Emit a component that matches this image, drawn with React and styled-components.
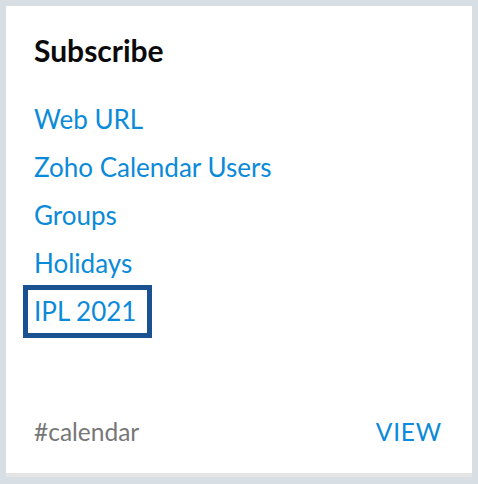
import React from 'react'
import styled, { createGlobalStyle } from 'styled-components'

const Global = createGlobalStyle`
  html, body {
    margin: 0;
    padding: 0;
    background: #d7dfe5;
  }
  body {
    font-family: Lato, "Noto Sans", sans-serif;
  }
`

const Card = styled.div`
  margin: 6px;
  width: 466px;
  height: 467px;
  padding: 0 0 0 28px;
  box-sizing: border-box;
  background: #fff;
  box-shadow: 0 4px 0 #e4e4e4;
  display: flex;
  flex-direction: column;
`

const Title = styled.h2`
  margin: 28px 0 0;
  font-size: 30px;
  font-weight: 700;
  line-height: 32px;
  color: #0a0a0a;
`

const List = styled.ul`
  list-style: none;
  margin: 38px 0 0;
  padding: 0;
  display: flex;
  flex-direction: column;
  align-items: flex-start;
  gap: 17px;
`

const Link = styled.a`
  display: inline-block;
  font-size: 26px;
  line-height: 31px;
  padding-right: ${p => (p.$focused ? '5px' : '0')};
  color: #0b8ad9;
  text-decoration: none;
  outline: ${p => (p.$focused ? '5px solid #1a5190' : 'none')};
  outline-offset: 6px;
`

const Footer = styled.div`
  margin-top: auto;
  margin-bottom: 27px;
  padding-right: 30px;
  display: flex;
  justify-content: space-between;
  align-items: center;
`

const Tag = styled.span`
  font-size: 24.5px;
  color: #777;
`

const View = styled.a`
  font-size: 24.5px;
  color: #0b8ad9;
  text-decoration: none;
  letter-spacing: 0.8px;
`

const links = ['Web URL', 'Zoho Calendar Users', 'Groups', 'Holidays', 'IPL 2021']

export default function App() {
  return (
    <>
      <Global />
      <Card>
        <Title>Subscribe</Title>
        <List>
          {links.map(l => (
            <li key={l}>
              <Link href="#" $focused={l === 'IPL 2021'}>{l}</Link>
            </li>
          ))}
        </List>
        <Footer>
          <Tag>#calendar</Tag>
          <View href="#">VIEW</View>
        </Footer>
      </Card>
    </>
  )
}
